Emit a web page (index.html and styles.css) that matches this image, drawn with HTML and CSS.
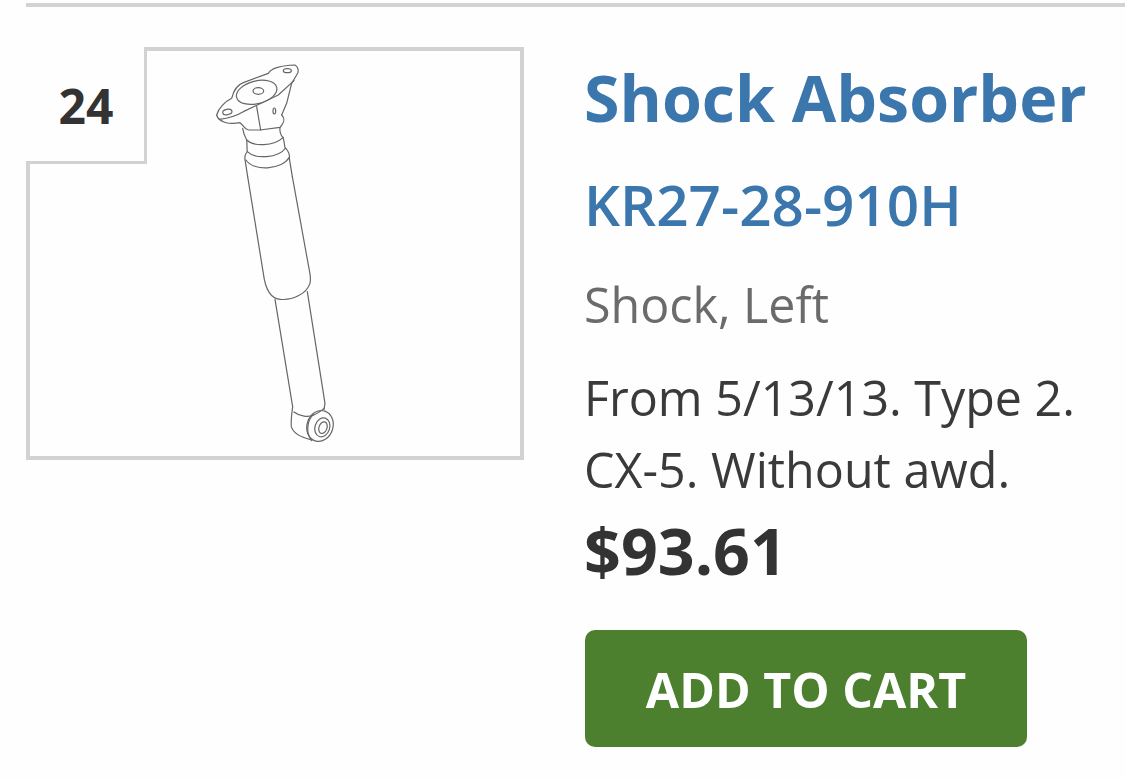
FILE: index.html
```html
<!DOCTYPE html>
<html lang="en">
<head>
<meta charset="utf-8">
<title>Shock Absorber</title>
<link rel="stylesheet" href="styles.css">
</head>
<body>
<main class="part">
  <figure class="diagram">
    <span class="callout">24</span>
    <svg class="drawing" viewBox="30 51 490 405" aria-hidden="true">
      <g class="ink" transform="translate(190 50) scale(.3333)">
        <path d="M80 195C85 175 105 155 125 145C130 125 140 105 160 98L235 70C245 55 265 47 315 45C325 50 328 65 320 75L305 100L290 160L275 195"/>
        <path d="M80 195C85 215 115 225 150 218C160 225 165 240 178 240L210 240L270 232C285 215 285 205 275 195"/>
        <path d="M88 208C110 205 135 200 160 185L265 135L312 92"/>
        <ellipse cx="200" cy="127" rx="62" ry="34" transform="rotate(-14 200 127)"/>
        <ellipse cx="205" cy="123" rx="16" ry="10"/>
        <ellipse cx="112" cy="186" rx="14" ry="8" transform="rotate(-10 112 186)"/>
        <ellipse cx="292" cy="62" rx="12" ry="6"/>
        <ellipse cx="253" cy="183" rx="4" ry="9"/>
        <path d="M200 170L212 240"/>
        <path d="M158 235C160 250 165 260 170 270C172 285 170 295 172 305C165 312 163 322 166 335L173 380"/>
        <path d="M270 232C268 245 272 255 280 265C283 275 283 285 285 293C295 300 300 315 298 325L307 380"/>
        <path d="M170 270C190 290 250 290 280 262"/>
        <path d="M172 305C195 328 265 325 287 294"/>
        <path d="M168 330C190 365 275 360 298 322"/>
      </g>
      <g class="ink" transform="translate(230 170) scale(.3333)">
        <path d="M53 20L100 310C105 350 120 385 150 388C190 392 230 370 240 340C244 325 240 310 236 290L187 20"/>
        <path d="M135 388L188 710"/>
        <path d="M232 365L285 700L282 718"/>
        <path d="M188 710C186 725 182 755 184 770C190 790 215 803 245 810"/>
        <path d="M192 726C210 740 235 742 250 736C265 728 275 722 282 715"/>
        <ellipse cx="270" cy="768" rx="39" ry="47" transform="rotate(18 270 768)"/>
        <ellipse cx="277" cy="772" rx="22" ry="29" transform="rotate(18 277 772)"/>
        <ellipse cx="279" cy="773" rx="12" ry="18" transform="rotate(18 279 773)"/>
        <path d="M250 734C232 750 226 788 245 812"/>
      </g>
    </svg>
  </figure>
  <section class="details">
    <h1 class="name">Shock Absorber</h1>
    <p class="number">KR27-28-910H</p>
    <p class="position">Shock, Left</p>
    <p class="notes">From 5/13/13. Type 2.<br>CX-5. Without awd.</p>
    <p class="price">$93.61</p>
    <button class="cart" type="button">ADD TO CART</button>
  </section>
</main>
</body>
</html>
```
FILE: styles.css
```css
* {
  box-sizing: border-box;
}

html,
body {
  margin: 0;
  height: 100%;
  background: #fefefe;
}

body {
  padding: 3px 0 0 26px;
  overflow: hidden;
  font-family: "Open Sans", sans-serif;
}

.part {
  display: flex;
  align-items: flex-start;
  gap: 60px;
  padding-top: 40px;
  border-top: 4px solid #d2d2d2;
}

.diagram {
  position: relative;
  flex: none;
  width: 498px;
  height: 413px;
  margin: 0;
  border: 4px solid #d2d2d2;
}

.drawing {
  display: block;
  width: 100%;
  height: 100%;
}

.ink * {
  fill: none;
  stroke: #666;
  stroke-width: 3.6;
  stroke-linecap: round;
  stroke-linejoin: round;
}

.callout {
  position: absolute;
  top: -4px;
  left: -4px;
  display: flex;
  align-items: center;
  justify-content: center;
  width: 121px;
  height: 117px;
  padding: 3px 0 0 2px;
  background: #fefefe;
  border-right: 3px solid #d2d2d2;
  border-bottom: 3px solid #d2d2d2;
  color: #333;
  font-size: 48px;
  font-weight: 700;
}

.details {
  flex: none;
  width: 541px;
  margin-top: 9px;
}

.name {
  margin: 0;
  color: #3b77ad;
  font-size: 64.5px;
  font-weight: 700;
  line-height: 82px;
  white-space: nowrap;
}

.number {
  margin: 32px 0 0;
  color: #3b77ad;
  font-size: 56.6px;
  font-weight: 600;
  line-height: 70px;
}

.position {
  margin: 33px 0 0;
  color: #6b6b6b;
  font-size: 48.4px;
  line-height: 62px;
}

.notes {
  margin: 26px 0 0;
  color: #3a3a3a;
  font-size: 48.4px;
  line-height: 72px;
}

.price {
  margin: 5px 0 0;
  color: #333;
  font-size: 64.5px;
  font-weight: 700;
  line-height: 80px;
}

.cart {
  display: block;
  width: 442px;
  height: 117px;
  margin: 40px 0 0 1px;
  padding: 0;
  border: 0;
  border-radius: 10px;
  background: #4c7f2e;
  color: #fff;
  font: 700 48.3px "Open Sans", sans-serif;
}
```
